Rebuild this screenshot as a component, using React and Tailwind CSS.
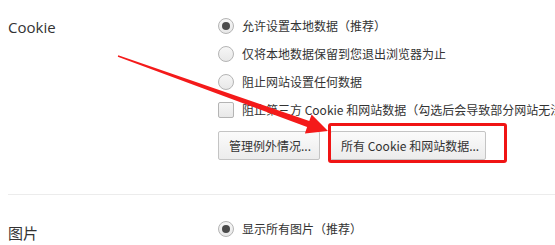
import React from "react";

const cjk = { fontFamily: '"Microsoft YaHei", "Noto Sans CJK SC", sans-serif' };

function Radio({ checked }) {
  return (
    <span className="w-4 h-4 rounded-full border border-[#b4b4b4] bg-gradient-to-b from-[#f6f6f6] to-[#e8e8e8] flex items-center justify-center shrink-0">
      {checked && <span className="w-[8px] h-[8px] rounded-full bg-[#4a4a4a]" />}
    </span>
  );
}

function Check() {
  return <span className="w-4 h-4 rounded-[2px] border border-[#b4b4b4] bg-gradient-to-b from-[#f6f6f6] to-[#e8e8e8] shrink-0" />;
}

function Row({ children, icon }) {
  return (
    <div className="h-7 flex items-center gap-2 whitespace-nowrap">
      {icon}
      <span className="text-[12px] text-[#333]" style={cjk}>{children}</span>
    </div>
  );
}

function Btn({ children, w }) {
  return (
    <button className={`h-[29px] ${w} px-[10px] rounded-[2px] border border-[#c4c4c4] bg-gradient-to-b from-[#fbfbfb] to-[#ececec] text-[12px] text-[#333] text-left whitespace-nowrap`} style={cjk}>
      {children}
    </button>
  );
}

export default function App() {
  // arrow geometry
  const sx = 118, sy = 56, tx = 328, ty = 131;
  const dx = tx - sx, dy = ty - sy, L = Math.hypot(dx, dy);
  const ux = dx / L, uy = dy / L, nx = -uy, ny = ux;
  const hl = 21, hw = 10;
  const bx = tx - hl * ux, by = ty - hl * uy;
  const p = (x, y) => `${x.toFixed(1)},${y.toFixed(1)}`;
  const shaft = [
    p(sx + 0.7 * nx, sy + 0.7 * ny),
    p(bx + 3.2 * nx, by + 3.2 * ny),
    p(bx + hw * nx, by + hw * ny),
    p(tx, ty),
    p(bx - hw * nx, by - hw * ny),
    p(bx - 3.2 * nx, by - 3.2 * ny),
    p(sx - 0.7 * nx, sy - 0.7 * ny),
  ].join(" ");

  return (
    <div className="relative w-[555px] h-[245px] bg-white overflow-hidden">
      <div className="flex pb-[34px]">
        <div className="w-[218px] pl-2 pt-[13px] h-7 leading-7 text-[15px] text-[#333]" style={{ fontFamily: '"Segoe UI", "Open Sans", sans-serif' }}>
          Cookie
        </div>
        <div className="flex-1 pt-3 min-w-0">
          <Row icon={<Radio checked />}>允许设置本地数据（推荐）</Row>
          <Row icon={<Radio />}>仅将本地数据保留到您退出浏览器为止</Row>
          <Row icon={<Radio />}>阻止网站设置任何数据</Row>
          <Row icon={<Check />}>阻止第三方 Cookie 和网站数据（勾选后会导致部分网站无法正常运行）</Row>
          <div className="flex gap-[10px] mt-[7px]">
            <Btn w="w-[102px]">管理例外情况...</Btn>
            <Btn w="w-[156px]">所有 Cookie 和网站数据...</Btn>
          </div>
        </div>
      </div>
      <div className="ml-2 border-t border-[#ececec]" />
      <div className="flex pt-5">
        <div className="w-[218px] pl-2 pt-[4px] h-7 leading-7 text-[15px] text-[#333]" style={cjk}>
          图片
        </div>
        <div className="flex-1">
          <Row icon={<Radio checked />}>显示所有图片（推荐）</Row>
        </div>
      </div>

      <div className="absolute left-[328px] top-[123px] w-[179px] h-[40px] border-[3px] border-[#f01414] rounded-[3px]" />
      <svg className="absolute left-0 top-0" width="555" height="245" viewBox="0 0 555 245">
        <polygon points={shaft} fill="#f41a1a" />
      </svg>
    </div>
  );
}
